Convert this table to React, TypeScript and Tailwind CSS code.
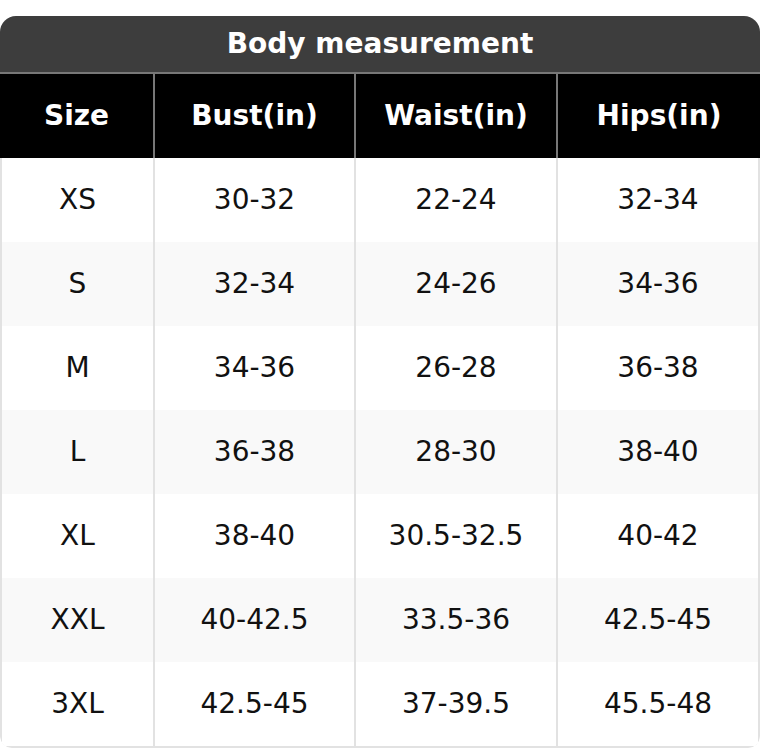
const headers = ['Size', 'Bust(in)', 'Waist(in)', 'Hips(in)'];

const rows = [
  ['XS', '30-32', '22-24', '32-34'],
  ['S', '32-34', '24-26', '34-36'],
  ['M', '34-36', '26-28', '36-38'],
  ['L', '36-38', '28-30', '38-40'],
  ['XL', '38-40', '30.5-32.5', '40-42'],
  ['XXL', '40-42.5', '33.5-36', '42.5-45'],
  ['3XL', '42.5-45', '37-39.5', '45.5-48'],
];

export default function App() {
  return (
    <div className="w-[760px] bg-white pt-[16px] font-['DejaVu_Sans',sans-serif] text-[28px]">
      <div className="overflow-hidden rounded-t-[16px] rounded-b-[12px]">
        {/* Title */}
        <div className="flex h-[58px] items-center justify-center border-b-2 border-[#777] bg-[#3d3d3d] font-bold leading-none text-white">
          Body measurement
        </div>

        {/* Header */}
        <div className="grid h-[84px] grid-cols-[153px_201px_202px_204px] bg-black font-bold leading-none text-white">
          {headers.map((h, i) => (
            <div key={h} className={`flex items-center justify-center ${i > 0 ? 'border-l-2 border-[#777]' : ''}`}>
              {h}
            </div>
          ))}
        </div>

        {/* Body */}
        <div className="rounded-b-[12px] border-x-2 border-b-2 border-[#e2e2e2]">
          {rows.map((r, ri) => (
            <div
              key={r[0]}
              className={`grid h-[84px] grid-cols-[151px_201px_202px_202px] leading-none text-[#111] ${ri % 2 === 1 ? 'bg-[#f9f9f9]' : 'bg-white'}`}
            >
              {r.map((c, ci) => (
                <div key={ci} className={`flex items-center justify-center ${ci > 0 ? 'border-l-2 border-[#e2e2e2]' : ''}`}>
                  {c}
                </div>
              ))}
            </div>
          ))}
        </div>
      </div>
    </div>
  );
}
